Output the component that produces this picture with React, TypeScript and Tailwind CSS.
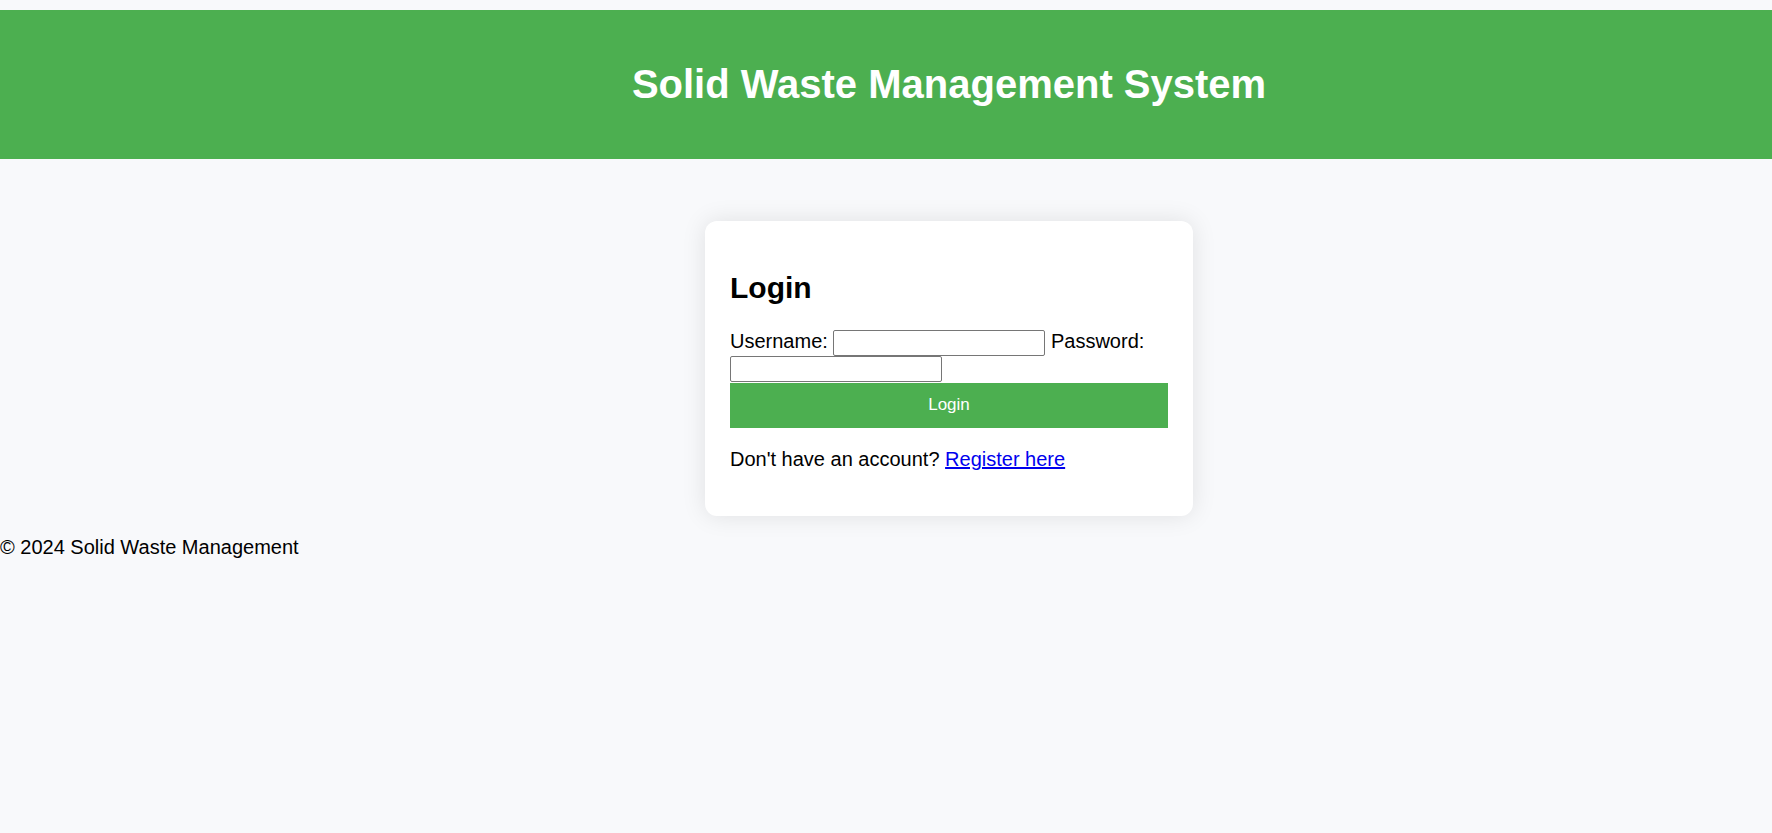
import { useId } from "react";
import type { InputHTMLAttributes, ReactNode } from "react";

const fieldClass =
  "inline-block w-[212px] rounded-[2px] border border-[#767676] bg-white px-1 align-baseline text-[17px]/6 text-black";

function Field({
  label,
  className,
  ...rest
}: { label: ReactNode } & InputHTMLAttributes<HTMLInputElement>) {
  const id = useId();
  return (
    <>
      <label htmlFor={id}>{label}</label>{" "}
      <input id={id} className={`${fieldClass} ${className ?? ""}`} {...rest} />{" "}
    </>
  );
}

function LoginForm() {
  return (
    <form onSubmit={(event) => event.preventDefault()}>
      <Field label="Username:" type="text" name="username" />
      <Field label="Password:" type="password" name="password" />
      <button
        type="submit"
        className="mt-px block w-full bg-[#4caf50] px-5 pt-[11px] pb-[13px] text-center text-[17px]/[21px] text-white"
      >
        Login
      </button>
    </form>
  );
}

export default function App() {
  return (
    <div className="flex min-h-screen flex-col bg-[#f8f9fb] pt-[10px] font-['Liberation_Sans',Arial,sans-serif] text-[20px]/[23px] text-black">
      <header className="bg-[#4caf50] py-[51px] pl-[126px] text-center text-white">
        <h1 className="text-[40px]/[47px] font-bold">
          Solid Waste Management System
        </h1>
      </header>
      <main className="flex justify-center pt-[62px] pl-[126px]">
        <section className="w-full max-w-[488px] rounded-xl bg-white px-[25px] pt-[50px] pb-[45px] shadow-[0_0_25px_rgba(0,0,0,0.1)]">
          <h2 className="mb-[25px] text-[30px]/[34px] font-bold">Login</h2>
          <LoginForm />
          <p className="mt-5">
            Don't have an account?{" "}
            <a href="#register" className="text-[#0000ee] underline">
              Register here
            </a>
          </p>
        </section>
      </main>
      <footer className="pt-5">
        <p>© 2024 Solid Waste Management</p>
      </footer>
    </div>
  );
}
